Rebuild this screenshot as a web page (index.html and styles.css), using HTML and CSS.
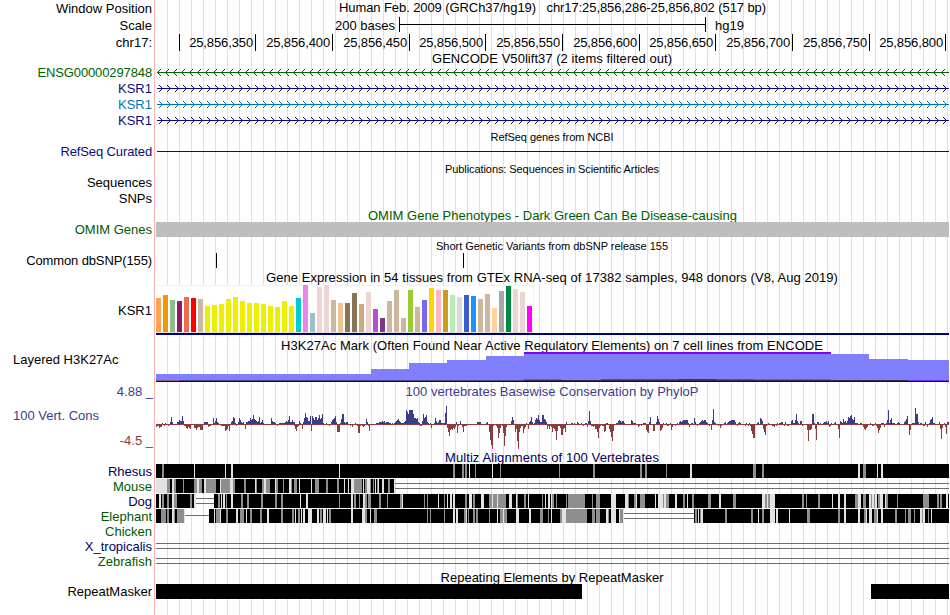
FILE: index.html
```html
<!DOCTYPE html>
<html lang="en">
<head>
<meta charset="UTF-8">
<meta name="viewport" content="width=device-width, initial-scale=1.0">
<title>Human chr17:25,856,286-25,856,802 hg19</title>
<link rel="stylesheet" href="styles.css">
</head>
<body>
<div id="browser">
    <div class="row h17"><span class="label">Window Position</span><span class="title position"><span class="fit" data-width="427">Human Feb. 2009 (GRCh37/hg19)   chr17:25,856,286-25,856,802 (517 bp)</span></span></div>
    <div class="row h17"><span class="label">Scale</span><div class="scale"><span class="bases">200 bases</span><span class="bracket"></span><span class="assembly">hg19</span></div></div>
    <div class="row h16"><span class="label low-label">chr17:</span><div class="ruler"><span></span><span>25,856,350</span><span>25,856,400</span><span>25,856,450</span><span>25,856,500</span><span>25,856,550</span><span>25,856,600</span><span>25,856,650</span><span>25,856,700</span><span>25,856,750</span><span>25,856,800</span></div></div>

    <div class="row h14"><span class="label"></span><span class="title gencode"><span class="fit" data-width="240">GENCODE V50lift37 (2 items filtered out)</span></span></div>
    <div class="row h16 green"><span class="label tight low-label">ENSG00000297848</span><svg class="gene" data-strand="-"></svg></div>
    <div class="row h16 navy"><span class="label low-label">KSR1</span><svg class="gene" data-strand="+"></svg></div>
    <div class="row h16 blue"><span class="label low-label">KSR1</span><svg class="gene" data-strand="+"></svg></div>
    <div class="row h16 navy"><span class="label low-label">KSR1</span><svg class="gene" data-strand="+"></svg></div>

    <div class="row h16"><span class="label"></span><span class="title small"><span class="fit" data-width="123">RefSeq genes from NCBI</span></span></div>
    <div class="row h16 navy"><span class="label tight">RefSeq Curated</span><svg id="refseq"></svg></div>
    <div class="row h16"><span class="label"></span><span class="title small"><span class="fit" data-width="214">Publications: Sequences in Scientific Articles</span></span></div>
    <div class="row h14"><span class="label">Sequences</span></div>
    <div class="row h17"><span class="label">SNPs</span></div>

    <div class="row h15 darkgreen"><span class="label"></span><span class="title omim"><span class="fit" data-width="369">OMIM Gene Phenotypes - Dark Green Can Be Disease-causing</span></span></div>
    <div class="row h15 darkgreen"><span class="label">OMIM Genes</span><div class="omim-bar"></div></div>
    <div class="row h16"><span class="label"></span><span class="title small"><span class="fit" data-width="232">Short Genetic Variants from dbSNP release 155</span></span></div>
    <div class="row h16"><span class="label tight">Common dbSNP(155)</span><svg id="snps"></svg></div>

    <div class="row h16"><span class="label"></span><span class="title gtex-title"><span class="fit" data-width="572">Gene Expression in 54 tissues from GTEx RNA-seq of 17382 samples, 948 donors (V8, Aug 2019)</span></span></div>
    <div class="row h50"><span class="label">KSR1</span><svg id="gtex"></svg></div>

    <div class="row h17"><span class="label"></span><span class="title h3k"><span class="fit" data-width="542">H3K27Ac Mark (Often Found Near Active Regulatory Elements) on 7 cell lines from ENCODE</span></span></div>
    <div class="row h30"><span class="label left">Layered H3K27Ac</span><svg id="h3k27ac"></svg></div>

    <div class="row h18 slate"><span class="label limit">4.88 _</span><span class="title"><span class="fit" data-width="293">100 vertebrates Basewise Conservation by PhyloP</span></span></div>
    <div class="row h50 slate"><div class="label stack"><span class="name">100 Vert. Cons</span><span class="low">-4.5 _</span></div><svg id="phylop"></svg></div>

    <div class="row h14 multiz"><span class="label"></span><span class="title"><span class="fit" data-width="214">Multiz Alignments of 100 Vertebrates</span></span></div>
    <div class="row h15 multiz"><span class="label">Rhesus</span><svg class="align" data-species="rhesus"></svg></div>
    <div class="row h15 darkgreen"><span class="label">Mouse</span><svg class="align" data-species="mouse"></svg></div>
    <div class="row h15 multiz"><span class="label">Dog</span><svg class="align" data-species="dog"></svg></div>
    <div class="row h15 darkgreen"><span class="label">Elephant</span><svg class="align" data-species="elephant"></svg></div>
    <div class="row h15 darkgreen"><span class="label">Chicken</span></div>
    <div class="row h15 multiz"><span class="label">X_tropicalis</span><svg class="align" data-species="frog"></svg></div>
    <div class="row h15 darkgreen"><span class="label">Zebrafish</span><svg class="align" data-species="zebrafish"></svg></div>

    <div class="row h15"><span class="label"></span><span class="title repeat"><span class="fit" data-width="223">Repeating Elements by RepeatMasker</span></span></div>
    <div class="row h15"><span class="label">RepeatMasker</span><svg id="repeats"></svg></div>
</div>
<script src="tracks.js"></script>
</body>
</html>
```

FILE: styles.css
```css
body {
    margin: 0;
    background: #fff;
    font-family: "Liberation Sans", Arial, Helvetica, sans-serif;
    font-size: 13px;
    color: #000;
    overflow: hidden;
}
#browser {
    width: 949px;
    height: 615px;
    /* pink divider, then a guide line every 12px */
    background:
        linear-gradient(#ffb4b4, #ffb4b4) 154px 0 / 1px 100% no-repeat,
        repeating-linear-gradient(to right, transparent 0, transparent 11px, #dcdcff 11px, #dcdcff 12px) 156px 0 no-repeat;
}
.row {
    display: grid;
    grid-template-columns: 152px 793px;
    column-gap: 4px;
    white-space: pre;
}
.h14 { height: 14px; line-height: 14px; }
.h15 { height: 15px; line-height: 15px; }
.h16 { height: 16px; line-height: 16px; }
.h17 { height: 17px; line-height: 17px; }
.h18 { height: 18px; line-height: 18px; }
.h30 { height: 30px; line-height: 15px; }
.h50 { height: 50px; line-height: 52px; }
.label {
    text-align: right;
}
.low-label {
    line-height: 18px;
}
.tight {
    letter-spacing: -0.12px;
}
.left {
    text-align: left;
    padding-left: 13px;
}
.limit {
    margin-right: -1px;
    line-height: 19px;
}
.stack {
    display: flex;
    flex-direction: column;
    line-height: 15px;
    padding: 8px 0 0 13px;
    margin-right: -1px;
}
.name {
    text-align: left;
}
.low {
    margin-top: 10px;
    color: #8c3c3c;
}
.title {
    text-align: center;
    padding-right: 1px;
}
.small {
    font-size: 11px;
    line-height: 18px;
}
.position {
    line-height: 15px;
    padding-right: 0;
}
.gencode {
    line-height: 17px;
}
.omim {
    line-height: 17px;
    padding-right: 0;
}
.gtex-title {
    line-height: 18px;
}
.h3k {
    line-height: 21px;
}
.slate .title {
    line-height: 20px;
}
.repeat {
    line-height: 17px;
}
.multiz .title {
    line-height: 15px;
}
.fit {
    display: inline-block;
}
.scale {
    display: flex;
}
.bases {
    width: 239px;
    margin-right: 4px;
    text-align: right;
}
.bracket {
    width: 305px;
    height: 15px;
    border: solid #000;
    border-width: 0 1px;
    background: linear-gradient(#000, #000) 0 7px / 100% 1px no-repeat;
}
.assembly {
    margin-left: 9px;
}
.ruler {
    display: grid;
    grid-template-columns: 24px 76px 77px 77px 76px 77px 77px 76px 77px 77px 76px;
    height: 15px;
}
.ruler span {
    border-right: 1px solid #000;
    padding-right: 2px;
    text-align: right;
    letter-spacing: -0.12px;
    line-height: 17px;
}
svg {
    display: block;
    width: 793px;
    height: 100%;
    overflow: hidden;
    shape-rendering: crispEdges;
}
.omim-bar {
    background: #bebebe;
}
.green {
    color: #006400;
}
.darkgreen {
    color: #005a00;
}
.navy {
    color: #0c0c78;
}
.blue {
    color: #0073b4;
}
.slate {
    color: #3c3c8c;
}
.multiz {
    color: #000064;
}
```

FILE: tracks.js
```js
const LEFT = 156;
const RIGHT = 949;
const NS = 'http://www.w3.org/2000/svg';

// x is in window coordinates, y is relative to the row
function rect(svg, x, y, w, h, fill) {
    const r = document.createElementNS(NS, 'rect');
    r.setAttribute('x', x - LEFT);
    r.setAttribute('y', y);
    r.setAttribute('width', w);
    r.setAttribute('height', h);
    r.setAttribute('fill', fill);
    svg.appendChild(r);
}

// Spread the titles to their set widths
document.querySelectorAll('.fit').forEach(el => {
    const target = Number(el.dataset.width);
    const gap = (target - el.getBoundingClientRect().width) / el.textContent.length;
    el.style.letterSpacing = gap + 'px';
});

// Genes: line with strand arrows every 8px
document.querySelectorAll('.gene').forEach(svg => {
    const plus = svg.dataset.strand === '+';
    rect(svg, 157, 8, RIGHT - LEFT, 1, 'currentColor');
    for (let x = plus ? 162 : 157; x < RIGHT + 3; x += 8) {
        for (let d = 1; d <= 3; d++) {
            const ax = plus ? x - d : x + d;
            rect(svg, ax, 8 - d, 1, 1, 'currentColor');
            rect(svg, ax, 8 + d, 1, 1, 'currentColor');
        }
    }
});

rect(document.getElementById('refseq'), 157, 7, 792, 1, 'currentColor');

const snps = document.getElementById('snps');
[216, 463].forEach(x => rect(snps, x, 0, 1, 15, '#000'));

const repeats = document.getElementById('repeats');
rect(repeats, 156, 0, 426, 15, '#000');
rect(repeats, 871, 0, 78, 15, '#000');

// GTEx expression, one bar per tissue
const expression = [
    34, 37, 32, 31, 35, 34, 33, 26, 27, 28, 33, 35, 31, 29, 29, 28, 26, 25,
    31, 26, 34, 47, 19, 45, 47, 32, 29, 29, 39, 28, 40, 23, 14, 31, 42, 14,
    42, 25, 32, 44, 42, 42, 37, 35, 37, 36, 33, 38, 24, 41, 46, 43, 40, 26
];
const tissueColors = [
    '#ffa54f', '#ee9a00', '#8fbc8f', '#8b1c62', '#ee6a50', '#ff0000', '#cdb79e',
    ...Array(13).fill('#eeee00'),
    '#00cdcd', '#ee82ee', '#9ac0cd', '#eed5d2', '#eed5d2', '#cdb79e', '#eec591',
    '#8b7355', '#8b7355', '#cdaa7d', '#eed5d2', '#b452cd', '#7a378b', '#cdb79e',
    '#cdb79e', '#cdb79e', '#9acd32', '#cdb79e', '#7a67ee', '#ffd700', '#ffb6c1',
    '#cd9b1d', '#b4eeb4', '#d9d9d9', '#3a5fcd', '#1e90ff', '#cdb79e', '#cdb79e',
    '#ffd39b', '#a6a6a6', '#008b45', '#eed5d2', '#eed5d2', '#ff00ff'
];
const gtex = document.getElementById('gtex');
rect(gtex, 156, 0, 378, 48, '#f2f2f2');
rect(gtex, 156, 1, 377, 46, '#fff');
rect(gtex, 156, 47, 378, 1, '#dcdcdc');
expression.forEach((h, i) => rect(gtex, LEFT + i * 7, 47 - h, 5, h, tissueColors[i]));
rect(gtex, 156, 48, 793, 2, '#000078');

// H3K27Ac: [start, end, top]
const h3k = document.getElementById('h3k27ac');
[
    [156, 371, 22], [371, 409, 17], [409, 447, 11], [447, 486, 8], [486, 524, 4],
    [524, 869, 2], [869, 908, 7], [908, 949, 8]
].forEach(([a, b, top]) => rect(h3k, a, top, b - a, 29 - top, '#8080ff'));
rect(h3k, 524, 0, 307, 2, '#8000ff');
rect(h3k, 156, 28, 793, 1, '#47478c');
rect(h3k, 156, 28, 23, 1, '#8c5a8c');
rect(h3k, 524, 27, 38, 1, '#6e6496');
rect(h3k, 601, 27, 77, 1, '#78417d');
rect(h3k, 678, 27, 38, 1, '#3c3264');
rect(h3k, 716, 27, 38, 1, '#415a9b');
rect(h3k, 754, 27, 77, 1, '#4664ff');
rect(h3k, 524, 28, 384, 1, '#3c2850');
rect(h3k, 908, 28, 41, 1, '#6432ff');
rect(h3k, 156, 29, 793, 1, '#180c24');

// PhyloP: [start, score, score, ...], -1 everywhere else
const scores = [
    [156, -3, -2, -2, -4, -3, -3, 1, -1, -2, 1, -1, -1, -2, -1, 2, 7, 2, -1, -1, -1, -1, 2, 2, 4, 3, 3, 8, 3],
    [184, -2, -2, -4, -5, -3, -4, -5, -1, -1, -1, -4, -4, -6, -4, -3, -3, -6, -6, -6, -1, 2, 2, 2, 2, -3, -2, -2, -1, -1, 6, 1, 3, 6, 2, 1],
    [219, -1, -1, -2, -2, -2, -2, -7, -6, -5, -2, -7, -1, 2, 3, 7, 6, 1, -2, -1, 2, 6, 4, 2, 1, 2, -1, -5],
    [246, 2, 2, 3, 3, 6, 4, 5, 9, 5, 4, 3, 2, 3, 7, 1, 2, 4, 1],
    [271, 6, 3, 2, 2, 1, -1, -2, -1, 1, 1, 1, 1, 1, 1, 2, 3, 2, 4, 8, 2, 2, 4, 2, 2],
    [294, -2, -5, -7, -3, -2, 3, 1, -1, -5, 2, 6, 11, 7, 6, 3, 3, 8, -7, 8, 6, 4, 7, 7, 4, 6, 9, 5, 6, 10, 1],
    [325, -1, 1, -1, -1, -2, -1, 2, 4, 5, 6, 8, 2, -8, -8, -8, 1, 5, 10, 10, 2, 1, 2, 2],
    [350, -2, -1, -3, -1, -1, 1, -1, -2, -9, -9, -2, -1, -2, -3, -2, -1, 5, 2, -2, -7],
    [376, 1, 1, 1, 2, 2, 2, 3, 2, 3, 1, 2, 2, 2, 1, 1, -1, 1, -1, 1, 2, 3, 4, 5, 3, 2, 1, 1, 1, 2, 3],
    [406, 14, 12, 10, 14, 14, 14, 14, 10, 6, 6, 5, 6, 2, 1, -2, -2, 3, 10, 6, 7, 9, 2, 1, -1, 1, -4, -1, -1, 1, 6, 3, 1, 2, 4, 4, 1, 1, 1, 1, 11, 18],
    [447, -4, -8, -12, -6, -5, -6, -4, -5, -3, 2, -9, -2, -1, 3, -1, -3, -8, -2, -2, -2],
    [477, 2, 2, 2, 2, -1, -1, -1, -1, -1, 1, 2, -1, -8, -16, -21, -25, -2, -1, -1, -2, -4, -14, -9, -4, -1, -2, -9, -22, -12, -3],
    [510, -1, 3, 7, 4, -1, -8, -5, -17, -25, -8, -4, -2, -2, -9, -5, -3, 1, -1, -5, 2, 3, 7, 2, -1, 1, 4, 6, 5, 9, 4, 2, 2, 9, 9, 5, 4, 2],
    [547, -5, -2, -5, -2, -3, -8, -4, -5, -7, -16, -7, -2, -2, -4, -11, -11, -5, -4, -8, 2],
    [571, 1, 1, -1, 1, -1, -1, 2, 1, -1, -1, 1, -1, -2, -1, 1, 1, -3, 3, 13, 3, -2, -2, -3, -2, -5, -5, -8, -14, -4, -2, -1, -2],
    [603, -2, -8, -7, 1, 1, -1, -5, -8, -13, -17, -7, -1, -1, 1, 1, 3, 4, 3, 2, 3, 3, 1],
    [631, 4, 3, 1, 1, 1, -1, -1, -3, -2, -1, -2, -1, 1, 1, 1, -6, -8, -9, 2, 7, -1, -1, -7, -7, -1, 2, 8, 5, 2, -7, -6, -4, 1],
    [664, -1, -1, 1, -2, -2, -1, 1, -6, -3, -1, -1, -2, -1, 1, -1, 2, 3, 2, 3, 4, 4, 4, 4, 4, 1, -3, -1, 1, 1, -1, 6, 2, -1, -2, -1, 1, 2, 3, 4, 3, 4, 4, 2, 1],
    [708, -1, -2, -1, -6, 4, 15, 2, 1, -1, -1, -2, -1, -4, -2, -1, -1, 1, 2, -1, 1, 2, 3, 3, 4, 4, 4, 4, 2, -1, -2, 1, 2, 1],
    [745, -2, 1, -1, -2, 1, -2, -7, -10, -14, -14, -1, -1, 1, 2, -1, 6, 5, 3, -5, -8, -11, -2, -1, 1],
    [771, -1, -2, -2, -3, -1, -2, 1, -1, 1, 1, 2, 2, -1, -2, 2, -1, -2, -2, -1, -1, 3, 4, 1, 1, 4, 10, 3, 1, -1, 3, 3, -2, -1, -1],
    [806, -1, -6, -17, -6, -6, -5, 10, 10, 1, -5, -16, 2, 2, -1, 1, -1, -1, 1, 2, 2, 3, 1, 3, -3, -2, 1, -1],
    [834, 1, 2, -1, -1, -5, -14, 3, 2, 1, 5, 2, 3, 1, 3, 7, 6, 8, 9, 5, 4, 7, 1, 1, 1, -1, -1, 1, 1, -1, -3, -5, -6, -4, -3],
    [870, 1, -1, -2, -2, -1, 1, -2, -4, -9, -6, -4, 1, 1, 1, -3, -1, 1, 4, 14, 1, 4, 6, 1, 1, 1, -1, -1, 1, 2, 1],
    [903, -1, 2, 3, 5, 8, -1, -11, -6, -1, 1, 1, 1, 16, 10, 10, 2, -1, 1, 1, -1, -2, -2, 2, -1, -3, -1, 1, 4, 5, 7, 1, 1],
    [935, -1, -1, -1, -1, 2, -5, -15, -4, -1, 1, -3, -10, 2, 2]
];
const phylop = document.getElementById('phylop');
rect(phylop, 156, 24, 793, 1, '#8c3c3c');
scores.forEach(([start, ...values]) => {
    values.forEach((v, i) => {
        if (v > 0) {
            rect(phylop, start + i, 24 - v, 1, v, '#3c3c8c');
        } else {
            rect(phylop, start + i, 24, 1, -v, '#8c3c3c');
        }
    });
});
// clipped scores
rect(phylop, 492, 47, 1, 2, '#ff00ff');
rect(phylop, 518, 47, 1, 2, '#ff00ff');

// Alignments. blocks: black spans, gaps: [start, end, number of lines],
// gray and light: [start, width] of the less conserved columns
const species = {
    rhesus: {
        blocks: [[156, 949]],
        gray: [[162, 2], [453, 2], [462, 2], [465, 2], [475, 1], [500, 1], [559, 1], [593, 2], [640, 2], [645, 2], [666, 1], [753, 3], [762, 2], [863, 3]],
        light: [[194, 1], [225, 1], [231, 2], [339, 1], [469, 1], [492, 1], [690, 2], [858, 2], [877, 1], [881, 2]]
    },
    mouse: {
        blocks: [[156, 394]],
        gaps: [[395, 949, 2]],
        gray: [[167, 3], [174, 2], [183, 1], [194, 3], [199, 3], [206, 10], [221, 9], [233, 2], [244, 2], [256, 1], [262, 2], [266, 4], [276, 2], [283, 1], [291, 1], [294, 3], [315, 4], [326, 2], [337, 2], [354, 8], [365, 2], [370, 1], [373, 1], [377, 1], [388, 2]],
        light: [[156, 11], [172, 2], [197, 2], [204, 2], [220, 1], [230, 3], [255, 1], [264, 2], [275, 1], [289, 2], [299, 1], [311, 1], [344, 1], [348, 1], [351, 3], [363, 1], [367, 3], [375, 1], [378, 1], [382, 2], [394, 1]]
    },
    dog: {
        blocks: [[156, 196], [214, 949]],
        gaps: [[196, 214, 2]],
        gray: [[162, 2], [167, 2], [174, 3], [190, 2], [218, 2], [226, 1], [241, 2], [247, 2], [261, 2], [275, 2], [281, 2], [339, 1], [354, 2], [359, 1], [365, 2], [368, 3], [379, 2], [387, 1], [400, 2], [424, 1], [427, 1], [444, 1], [465, 2], [473, 2], [489, 3], [493, 4], [498, 8], [517, 1], [524, 2], [542, 1], [552, 2], [556, 1], [566, 1], [568, 17], [592, 1], [596, 4], [628, 1], [634, 2], [640, 5], [663, 1], [666, 3], [683, 2], [692, 2], [708, 3], [733, 3], [765, 2], [768, 2], [802, 2], [806, 1], [818, 2], [855, 3], [863, 3], [871, 1], [874, 1], [878, 2], [886, 2], [897, 1], [923, 6], [937, 2], [940, 2]],
        light: [[159, 2], [172, 2], [194, 2], [221, 1], [223, 2], [231, 2], [300, 1], [306, 2], [351, 2], [363, 2], [402, 1], [438, 1], [447, 1], [450, 2], [453, 2], [469, 3], [481, 3], [492, 1], [497, 1], [509, 3], [516, 1], [528, 1], [545, 1], [548, 2], [551, 1], [611, 5], [625, 3], [636, 1], [655, 1], [658, 5], [664, 2], [675, 2], [687, 1], [719, 2], [762, 3], [767, 1], [770, 5], [832, 1], [838, 2], [844, 2], [858, 3], [869, 2], [872, 2], [875, 2], [880, 3], [885, 1], [946, 2]]
    },
    elephant: {
        blocks: [[156, 185], [209, 624], [694, 949]],
        gaps: [[185, 209, 1], [624, 694, 2]],
        gray: [[161, 5], [167, 2], [174, 1], [177, 7], [216, 4], [226, 2], [240, 4], [250, 2], [260, 2], [281, 2], [292, 2], [298, 2], [320, 2], [329, 2], [365, 2], [374, 3], [427, 1], [430, 1], [444, 1], [464, 2], [468, 1], [473, 2], [476, 2], [489, 1], [500, 3], [504, 3], [540, 3], [548, 1], [560, 2], [566, 21], [592, 3], [596, 4], [608, 1], [620, 3], [695, 2], [700, 1], [725, 2], [751, 2], [762, 2], [807, 3], [838, 2], [864, 2], [874, 3], [895, 2], [905, 1], [908, 3], [914, 1], [922, 1], [928, 1]],
        light: [[172, 2], [184, 1], [214, 1], [220, 1], [236, 2], [246, 1], [267, 2], [295, 1], [301, 1], [303, 2], [308, 4], [317, 2], [323, 3], [327, 1], [351, 2], [362, 3], [370, 1], [453, 2], [456, 2], [466, 1], [497, 1], [503, 1], [516, 2], [518, 1], [529, 2], [551, 1], [562, 4], [606, 2], [611, 5], [619, 1], [623, 1], [698, 1], [701, 2], [758, 1], [770, 5], [776, 2], [789, 1], [844, 2], [858, 2], [866, 1], [869, 3], [877, 1], [881, 2], [920, 2], [923, 2], [931, 1]]
    },
    frog: { gaps: [[156, 949, 2]] },
    zebrafish: { gaps: [[156, 949, 2]] }
};
document.querySelectorAll('.align').forEach(svg => {
    const s = species[svg.dataset.species];
    (s.blocks || []).forEach(([a, b]) => rect(svg, a, 0, b - a, 14, '#000'));
    (s.gray || []).forEach(([x, w]) => rect(svg, x, 0, w, 14, '#8e8e8e'));
    (s.light || []).forEach(([x, w]) => rect(svg, x, 0, w, 14, '#e2e2e2'));
    (s.gaps || []).forEach(([a, b, lines]) => {
        (lines === 1 ? [6] : [4, 9]).forEach(y => rect(svg, a, y, b - a, 1, '#6e6e6e'));
    });
});
```
